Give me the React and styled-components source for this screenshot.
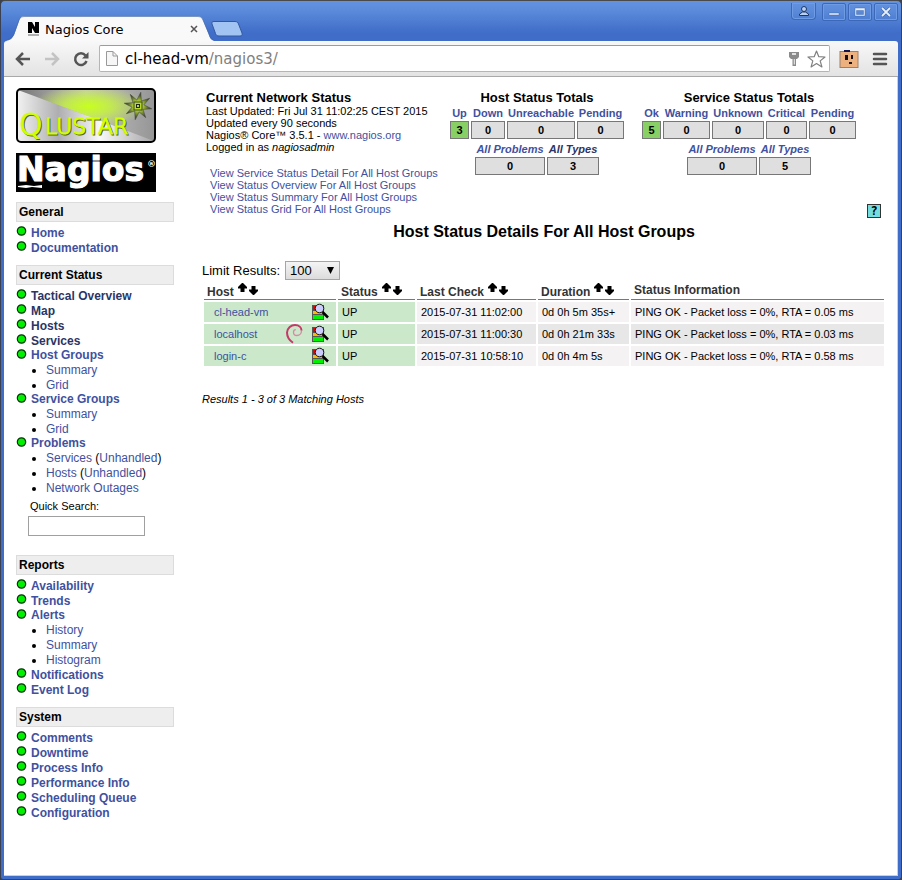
import React from "react";
import styled, { createGlobalStyle } from "styled-components";

const GlobalStyle = createGlobalStyle`
  *, *::before, *::after { box-sizing: border-box; }
  body {
    margin: 0;
    background: #3d4048;
    color: #000;
    font-family: "Liberation Sans", Arial, sans-serif;
    font-size: 11px;
    line-height: 12px;
  }
  a { color: #3f51a0; text-decoration: none; }
  ul, h1, h2, h3, p { margin: 0; padding: 0; }
  svg { display: block; flex: none; overflow: visible; }
`;

/* ---------- window frame ---------- */

const Window = styled.div`
  display: flex;
  flex-direction: column;
  min-height: 100vh;
  padding: 0 3px 3px;
  border: 1px solid #3a4152;
  border-top-color: #4a4a4a;
  border-radius: 5px 5px 3px 3px;
  background: linear-gradient(#6393e0 0, #5a8ad9 10px, #3f6dc8 32px, #3f6dc8 100%);
`;

const TitleBar = styled.header`
  display: flex;
  align-items: flex-start;
  height: 40px;
`;

const TabStrip = styled.div`
  display: flex;
  flex: 1;
  align-items: flex-end;
  align-self: stretch;
  padding-left: 2px;
`;

const TabShape = styled.div`
  display: grid;
  width: 208px;
  height: 25px;

  > * { grid-area: 1 / 1; }
`;

const TabContent = styled.div`
  display: flex;
  align-items: center;
  gap: 5px;
  padding: 1px 16px 0 21px;
  font: 13px/15px "DejaVu Sans", sans-serif;
`;

const TabTitle = styled.span`
  flex: 1;
`;

const IconButton = styled.button`
  display: flex;
  align-items: center;
  justify-content: center;
  flex: none;
  width: ${(p) => p.$width || 16}px;
  height: ${(p) => p.$height || 16}px;
  padding: 0;
  border: 0;
  background: none;
`;

const NewTab = styled(IconButton)`
  margin: 0 0 4px -3px;
`;

const WindowControls = styled.div`
  display: flex;
  gap: 2px;
  padding-top: 2px;
`;

const WindowButton = styled(IconButton)`
  border: 1px solid #3d68b8;
  border-radius: 2px;
  box-shadow: inset 0 0 0 1px #6f9be4;
`;

const ProfileButton = styled(WindowButton)`
  margin-right: 4px;
  border-top: 0;
  border-radius: 0 0 4px 4px;
`;

const Toolbar = styled.nav`
  display: flex;
  align-items: center;
  height: 36px;
  padding: 0 10px;
  border-bottom: 1px solid #a9a9a9;
  border-radius: 3px 3px 0 0;
  background: linear-gradient(#f8f8f8, #e3e3e3);
`;

const NavButtons = styled.div`
  display: flex;
  gap: 11px;
  margin-right: 9px;
`;

const AddressBar = styled.div`
  display: flex;
  flex: 1;
  align-items: center;
  gap: 7px;
  height: 27px;
  margin-right: 9px;
  padding: 0 3px 0 6px;
  border: 1px solid #b5b5b5;
  border-top-color: #9c9c9c;
  border-radius: 2px;
  background: #fff;
`;

const Address = styled.span`
  flex: 1;
  color: #808080;
  font: 15px/20px "DejaVu Sans", sans-serif;
`;

const Domain = styled.span`
  color: #000;
`;

const ToolbarActions = styled.div`
  display: flex;
  align-items: center;
  gap: 13px;
`;

const Viewport = styled.main`
  display: flex;
  flex: 1;
  align-items: flex-start;
  gap: 28px;
  padding: 11px 11px 40px 12px;
  border-right: 1px solid #d0d0d0;
  border-bottom: 1px solid #d0d0d0;
  background: #fff;
`;

/* ---------- sidebar ---------- */

const Sidebar = styled.aside`
  display: flex;
  flex: none;
  flex-direction: column;
  gap: 10px;
  width: 158px;
`;

const SectionTitle = styled.h2`
  height: 20px;
  padding-left: 2px;
  border: 1px solid #dcdcdc;
  background: #eee;
  font-size: 12px;
  line-height: 18px;
`;

const Menu = styled.ul`
  padding-top: 4px;
  list-style: none;
  font-size: 12px;
  line-height: 15px;
`;

const Section = styled.section`
  & + & { margin-top: -1px; }
`;

const MenuRow = styled.div`
  display: flex;
  gap: 4px;
  height: ${(p) => (p.$compact ? 14 : 15)}px;
  padding-left: 1px;
  font-weight: bold;
  line-height: ${(p) => (p.$compact ? 13 : 15)}px;
`;

const MenuLink = styled.a`
  color: ${(p) => (p.$dark ? "#2b3566" : "#3f51a0")};
`;

const SubMenu = styled.ul`
  padding-left: 30px;
  list-style: disc;
`;

const SearchForm = styled.form`
  display: flex;
  flex-direction: column;
  align-items: flex-start;
  gap: 4px;
  padding: 4px 0 10px 12px;
`;

const SearchLabel = styled.label`
  padding-left: 2px;
`;

const SearchInput = styled.input`
  width: 117px;
  height: 20px;
  padding: 1px 3px;
  border: 1px solid #a0a0a0;
  background: #fff;
  font: 12px "Liberation Sans", sans-serif;
`;

/* ---------- status page ---------- */

const Content = styled.section`
  flex: 1;
  min-width: 0;
`;

const Summary = styled.div`
  display: flex;
  align-items: flex-start;
  gap: 14px;
`;

const Overview = styled.div`
  width: 232px;
  padding: 2px 0 0 4px;
  white-space: nowrap;
`;

const Heading = styled.h3`
  font-size: 13px;
  line-height: 15px;
`;

const ViewLinks = styled.ul`
  padding: 14px 0 0 4px;
  list-style: none;
`;

const Totals = styled.div`
  display: flex;
  flex-direction: column;
  align-items: center;
  padding-top: 2px;
`;

const TotalsTable = styled.table`
  border-spacing: 2px 1px;
  text-align: center;
  font-weight: bold;
  font-style: ${(p) => (p.$italic ? "italic" : "normal")};

  & + & { margin-top: 1px; }
`;

const TotalsHead = styled.th`
  width: ${(p) => p.$width}px;
  height: 14px;
  padding: 0;
  white-space: nowrap;
`;

const TotalsCell = styled.td`
  height: 18px;
  padding: 0;
  border: 1px solid #777;
  background: ${(p) => (p.$ok ? "#88d066" : "#dfdfdf")};
  font-style: normal;
`;

const HelpRow = styled.div`
  display: flex;
  justify-content: flex-end;
  margin-top: -11px;
  padding-right: 5px;
`;

const HelpButton = styled.button`
  width: 14px;
  height: 14px;
  padding: 0;
  border: 1px solid #333;
  background: #74dede;
  color: #000;
  font: bold 12px/12px "DejaVu Sans Mono", monospace;
`;

const PageTitle = styled.h1`
  margin: 5px 0 20px;
  text-align: center;
  font-size: 16px;
  line-height: 18px;
`;

const LimitRow = styled.div`
  display: flex;
  align-items: center;
  gap: 5px;
  font-size: 13px;
  line-height: 19px;
`;

const SelectBox = styled.div`
  display: grid;
  align-items: center;

  > * { grid-area: 1 / 1; }
  > svg { justify-self: end; margin-right: 6px; pointer-events: none; }
`;

const Select = styled.select`
  width: 55px;
  height: 19px;
  padding: 0 4px;
  appearance: none;
  border: 1px solid #a5a5a5;
  border-radius: 0;
  background: linear-gradient(#f4f4f4, #dcdcdc);
  color: #000;
  font: 13px "Liberation Sans", sans-serif;
`;

const StatusTable = styled.table`
  width: 100%;
  margin-top: 2px;
  table-layout: fixed;
  border-spacing: 2px;
`;

const Col = styled.col`
  width: ${(p) => (p.$width ? p.$width + "px" : "auto")};
`;

const HeadCell = styled.th`
  height: 16px;
  padding: 0 3px;
  border-bottom: 1px solid #777;
  color: #333;
  font-size: 12px;
  text-align: left;
  vertical-align: top;
`;

const HeadLabel = styled.span`
  display: flex;
  align-items: flex-start;
  gap: 4px;
  padding-top: ${(p) => (p.$sortable ? 2 : 0)}px;
  line-height: 12px;

  > svg { margin-top: -3px; }
`;

const Row = styled.tr`
  background: ${(p) => (p.$odd ? "#e7e7e7" : "#f4f2f2")};
`;

const Cell = styled.td`
  height: 20px;
  padding: 0 4px;
  background: ${(p) => (p.$up ? "#cbe8cb" : "transparent")};
  white-space: nowrap;
`;

const HostCell = styled.div`
  display: flex;
  align-items: center;
  gap: 9px;
  padding: 0 3px 0 6px;

  > a { flex: 1; }
`;

const Results = styled.p`
  margin-top: 25px;
  font-style: italic;
`;

/* ---------- icons ---------- */

const TabBackground = () => (
  <svg width="208" height="25" viewBox="0 0 208 25">
    <path d="M0 25 C4 24 6 23 8 19 L13 5 C14 1 16 0 19 0 H191 C194 0 196 1 197 4 L203 19 C204 23 206 24 208 25 Z" fill="#f9f9f9" />
    <path d="M0 24 C4 23 6 22 8 18 L13 4 C14 1 16 .5 19 .5 H191 C194 .5 196 1 197 4 L203 18 C204 22 206 23 208 24" fill="none" stroke="#4568a8" strokeWidth=".7" />
  </svg>
);

const FavIcon = () => (
  <svg width="13" height="14" viewBox="0 0 13 14">
    <path d="M1 0h4l3 5V0h4v11H8L5 6v5H1z" fill="#000" />
    <path d="M1 13h11" stroke="#666" />
  </svg>
);

const CloseIcon = () => (
  <svg width="8" height="8" viewBox="0 0 8 8">
    <path d="M1 1l6 6M7 1L1 7" stroke="#555" strokeWidth="1.5" />
  </svg>
);

const NewTabIcon = () => (
  <svg width="32" height="16" viewBox="0 0 32 16">
    <path d="M3 .5h21c2 0 3 1 3.500 2.500L31 12c.5 2 0 3-2 3H8c-2 0-3-1-3.500-2.500L1 3C.5 1.500 1 .5 3 .5z" fill="#a2c4f3" stroke="#33589f" />
  </svg>
);

const ProfileIcon = () => (
  <svg width="12" height="12" viewBox="0 0 12 12">
    <path d="M1.500 10.500V9L4.500 7h3l3 2v1.500z" fill="#b9d0f3" stroke="#1b3564" />
    <circle cx="6" cy="4" r="2.500" fill="#b9d0f3" stroke="#1b3564" />
  </svg>
);

const MinimizeIcon = () => (
  <svg width="12" height="10" viewBox="0 0 12 10">
    <rect x="1" y="6" width="10" height="2" fill="#e6effc" stroke="#345c9f" strokeWidth=".4" />
  </svg>
);

const MaximizeIcon = () => (
  <svg width="12" height="10" viewBox="0 0 12 10">
    <path d="M1 1h10v8H1zM2.500 3.500v4h7v-4z" fill="#e6effc" fillRule="evenodd" stroke="#345c9f" strokeWidth=".4" />
  </svg>
);

const WindowCloseIcon = () => (
  <svg width="10" height="10" viewBox="0 0 10 10">
    <path d="M1 1l8 8M9 1L1 9" stroke="#345c9f" strokeWidth="3" />
    <path d="M1 1l8 8M9 1L1 9" stroke="#e6effc" strokeWidth="1.800" />
  </svg>
);

const ArrowIcon = ({ color, flip }) => (
  <svg width="16" height="14" viewBox="0 0 16 14">
    <path d={flip ? "M1 7h12M8 1l6 6-6 6" : "M15 7H3M8 1L2 7l6 6"} fill="none" stroke={color} strokeWidth="2.500" />
  </svg>
);

const ReloadIcon = () => (
  <svg width="16" height="16" viewBox="0 0 16 16">
    <path d="M12.500 4.500A5.800 5.800 0 1 0 13.500 10" fill="none" stroke="#555" strokeWidth="2.500" />
    <path d="M15.500 1v6.500H9z" fill="#555" />
  </svg>
);

const PageIcon = () => (
  <svg width="12" height="15" viewBox="0 0 12 15">
    <path d="M.5.5h6.500l4.500 4.500v9.500H.5z" fill="#f6f6f6" stroke="#999" />
    <path d="M7 .5V5h4.500" fill="none" stroke="#999" />
  </svg>
);

const KeyIcon = () => (
  <svg width="12" height="16" viewBox="0 0 12 16">
    <path d="M1 1h10v5L9 8H8v7H4.500V8H3L1 6zM4 2.200v1.600h4V2.200zM5.800 8v5.500h.9V8z" fill="#8b8b8b" fillRule="evenodd" />
  </svg>
);

const StarIcon = () => (
  <svg width="19" height="18" viewBox="0 0 19 18">
    <path d="M9.500 1l2.300 5.700 6.200.3-4.800 3.900 1.700 6-5.400-3.400-5.400 3.400 1.700-6L1 7l6.200-.3z" fill="#fff" stroke="#808080" strokeWidth="1.200" strokeLinejoin="round" />
  </svg>
);

const BoxFaceIcon = () => (
  <svg width="20" height="20" viewBox="0 0 20 20">
    <rect x="1" y="2.500" width="18" height="16" fill="#edb17f" stroke="#9b806c" />
    <path d="M5 1h6v2H5z" fill="#12124f" />
    <path d="M6 6h3v5H6zM12 6h2v4h-2zM10 13h3v2h-3z" fill="#171010" />
  </svg>
);

const MenuIcon = () => (
  <svg width="14" height="14" viewBox="0 0 14 14">
    <path d="M1 2h12M1 7h12M1 12h12" stroke="#555" strokeWidth="2.500" strokeLinecap="round" />
  </svg>
);

/* Eight long rays around the badge in the logo's corner. */
const rays = Array.from({ length: 16 }, (_, i) => {
  const angle = (i * Math.PI) / 8 + 0.2;
  const radius = i % 2 ? 6 : 14;
  return `${122 + radius * Math.cos(angle)},${18 + radius * Math.sin(angle)}`;
}).join(" ");

const QlustarLogo = () => (
  <svg width="140" height="55" viewBox="0 0 140 55" role="img" aria-label="Qlustar">
    <defs>
      <linearGradient id="metal" x1="0" y1="0" x2="1" y2="0">
        <stop offset="0" stopColor="#f2f2f2" />
        <stop offset=".3" stopColor="#aeaeb0" />
        <stop offset=".6" stopColor="#f8f8f8" />
        <stop offset="1" stopColor="#a5a5a7" />
      </linearGradient>
      <linearGradient id="shade" x1="0" y1="0" x2="1" y2="0">
        <stop offset="0" stopColor="#777" />
        <stop offset=".5" stopColor="#c5c5c5" />
        <stop offset="1" stopColor="#969696" />
      </linearGradient>
      <radialGradient id="glow" cx=".52" cy=".32" r=".42">
        <stop offset="0" stopColor="#c8ff1c" />
        <stop offset=".4" stopColor="#c5f53a" stopOpacity=".8" />
        <stop offset="1" stopColor="#c8f040" stopOpacity="0" />
      </radialGradient>
      <radialGradient id="ray" gradientUnits="userSpaceOnUse" cx="122" cy="18" r="14">
        <stop offset=".3" stopColor="#b4d830" />
        <stop offset=".9" stopColor="#33382e" />
      </radialGradient>
    </defs>
    <rect x="1" y="1" width="138" height="53" rx="4" fill="url(#metal)" />
    <path d="M2 2H138V53L80 31Z" fill="url(#shade)" />
    <path d="M2 2H138V53L80 31Z" fill="url(#glow)" />
    <polygon points={rays} fill="url(#ray)" stroke="#4a4f42" strokeWidth=".6" />
    <rect x="118" y="14" width="8" height="8" fill="#bad832" stroke="#3c4725" />
    <rect x="120.500" y="16.500" width="3" height="3" fill="none" stroke="#202820" />
    <g fontFamily="DejaVu Sans" fontWeight="200" strokeWidth="1.200">
      <text x="4" y="48" fontSize="30" fill="#5a6520" stroke="#5a6520">Q</text>
      <text x="30" y="47" fontSize="22" fill="#5a6520" stroke="#5a6520">LUSTAR</text>
      <text x="3" y="47" fontSize="30" fill="#d0ff00" stroke="#d0ff00">Q</text>
      <text x="29" y="46" fontSize="22" fill="#d0ff00" stroke="#d0ff00">LUSTAR</text>
    </g>
    <rect x="1" y="1" width="138" height="53" rx="4" fill="none" stroke="#000" strokeWidth="2" />
  </svg>
);

const NagiosLogo = () => (
  <svg width="140" height="39" viewBox="0 0 140 39" role="img" aria-label="Nagios">
    <rect width="140" height="39" fill="#000" />
    <g fill="#fff" fontFamily="DejaVu Sans" fontWeight="bold">
      <text x="1" y="28" fontSize="33" stroke="#fff" strokeWidth="1.200">Nagios</text>
      <text x="131" y="14" fontSize="9">®</text>
    </g>
    <path d="M2 33l8-1 8 1 8-1v3l-10-1-6 1-8-1z" fill="#fff" />
  </svg>
);

const GreenDot = () => (
  <svg width="10" height="10" viewBox="0 0 10 10">
    <circle cx="4.500" cy="5" r="4.200" fill="#00f000" stroke="#073807" strokeWidth="1.200" />
  </svg>
);

const SortIcons = () => (
  <svg width="21" height="12" viewBox="0 0 21 12">
    <path d="M4 0h1l4 4v1.500H6.500V9h-4V5.500H0V4z" fill="#000" />
    <path d="M13.500 3h4v3.500H20V8l-4 4h-1l-4-4V6.500h2.500z" fill="#000" />
  </svg>
);

const SelectArrow = () => (
  <svg width="8" height="8" viewBox="0 0 8 8">
    <path d="M1 0h7L4.500 7z" fill="#000" />
  </svg>
);

const DetailIcon = () => (
  <svg width="17" height="18" viewBox="0 0 17 18">
    <rect x=".5" y="2.500" width="11" height="14" fill="#ffb800" stroke="#555" />
    <path d="M1 3h4v4H1z" fill="#f00000" />
    <path d="M1 12h10v4H1z" fill="#00f000" />
    <path d="M1 7.500h3M1 11.500h10" stroke="#555" />
    <path d="M10.500 9l5.500 5.500" stroke="#000" strokeWidth="2.500" />
    <circle cx="7.500" cy="5.500" r="4.300" fill="#ccccff" stroke="#111" />
  </svg>
);

const DebianIcon = () => (
  <svg width="17" height="20" viewBox="0 0 17 20">
    <path d="M15.500 6.500c0 3-2 5-4.500 5-2 0-3.500-1.500-3.500-3.300 0-1.500 1-2.500 2.300-2.500" fill="none" stroke="#d78aa4" strokeWidth="1.300" />
    <path d="M7 18.800C3 16 1 12 1 8.500 1.500 4 5 1 9 1c4 0 6.500 2.500 6.500 5.500" fill="none" stroke="#c63a68" strokeWidth="2" />
  </svg>
);

/* ---------- data ---------- */

const sections = [
  { title: "General", items: [{ label: "Home" }, { label: "Documentation" }] },
  {
    title: "Current Status",
    search: true,
    items: [
      { label: "Tactical Overview", dark: true },
      { label: "Map", dark: true },
      { label: "Hosts", dark: true },
      { label: "Services", dark: true },
      { label: "Host Groups", children: [["Summary"], ["Grid"]] },
      { label: "Service Groups", children: [["Summary"], ["Grid"]] },
      { label: "Problems", children: [["Services", "Unhandled"], ["Hosts", "Unhandled"], ["Network Outages"]] },
    ],
  },
  {
    title: "Reports",
    items: [
      { label: "Availability" },
      { label: "Trends" },
      { label: "Alerts", children: [["History"], ["Summary"], ["Histogram"]] },
      { label: "Notifications" },
      { label: "Event Log" },
    ],
  },
  {
    title: "System",
    items: ["Comments", "Downtime", "Process Info", "Performance Info", "Scheduling Queue", "Configuration"].map((label) => ({ label })),
  },
];

const totals = [
  {
    title: "Host Status Totals",
    states: [["Up", 3, 19], ["Down", 0, 34], ["Unreachable", 0, 68], ["Pending", 0, 47]],
    all: [["All Problems", 0, 70], ["All Types", 3, 52, true]],
  },
  {
    title: "Service Status Totals",
    states: [["Ok", 5, 19], ["Warning", 0, 47], ["Unknown", 0, 52], ["Critical", 0, 41], ["Pending", 0, 47]],
    all: [["All Problems", 0, 70], ["All Types", 5, 52]],
  },
];

const views = ["Service Status Detail", "Status Overview", "Status Summary", "Status Grid"];

const columns = [
  ["Host", 132],
  ["Status", 77],
  ["Last Check", 119],
  ["Duration", 91],
  ["Status Information", 0],
];

const hosts = [
  { name: "cl-head-vm", check: "2015-07-31 11:02:00", duration: "0d 0h 5m 35s+", rta: "0.05" },
  { name: "localhost", debian: true, check: "2015-07-31 11:00:30", duration: "0d 0h 21m 33s", rta: "0.03" },
  { name: "login-c", check: "2015-07-31 10:58:10", duration: "0d 0h 4m 5s", rta: "0.58" },
];

/* ---------- parts ---------- */

const MenuItem = ({ item }) => (
  <li>
    <MenuRow $compact={Boolean(item.children)}>
      <GreenDot />
      <MenuLink href="#" $dark={item.dark}>{item.label}</MenuLink>
    </MenuRow>
    {item.children && (
      <SubMenu>
        {item.children.map(([label, extra]) => (
          <li key={label}>
            <a href="#">{label}</a>
            {extra && <> (<a href="#">{extra}</a>)</>}
          </li>
        ))}
      </SubMenu>
    )}
  </li>
);

const TotalsRows = ({ entries, italic }) => (
  <TotalsTable $italic={italic}>
    <thead>
      <tr>
        {entries.map(([label, , width, dark]) => (
          <TotalsHead key={label} $width={width} scope="col">
            <MenuLink href="#" $dark={dark}>{label}</MenuLink>
          </TotalsHead>
        ))}
      </tr>
    </thead>
    <tbody>
      <tr>
        {entries.map(([label, count], i) => (
          <TotalsCell key={label} $ok={!italic && i === 0}>{count}</TotalsCell>
        ))}
      </tr>
    </tbody>
  </TotalsTable>
);

const BrowserChrome = () => (
  <>
    <TitleBar>
      <TabStrip>
        <TabShape>
          <TabBackground />
          <TabContent>
            <FavIcon />
            <TabTitle>Nagios Core</TabTitle>
            <IconButton $width={8} $height={8} aria-label="Close tab"><CloseIcon /></IconButton>
          </TabContent>
        </TabShape>
        <NewTab $width={32} aria-label="New tab"><NewTabIcon /></NewTab>
      </TabStrip>
      <WindowControls>
        <ProfileButton $width={25} $height={17} aria-label="Profile"><ProfileIcon /></ProfileButton>
        <WindowButton $width={24} $height={18} aria-label="Minimize"><MinimizeIcon /></WindowButton>
        <WindowButton $width={24} $height={18} aria-label="Maximize"><MaximizeIcon /></WindowButton>
        <WindowButton $width={24} $height={18} aria-label="Close"><WindowCloseIcon /></WindowButton>
      </WindowControls>
    </TitleBar>
    <Toolbar>
      <NavButtons>
        <IconButton $width={18} aria-label="Back"><ArrowIcon color="#555" /></IconButton>
        <IconButton $width={18} aria-label="Forward"><ArrowIcon color="#c3c3c3" flip /></IconButton>
        <IconButton $width={18} aria-label="Reload"><ReloadIcon /></IconButton>
      </NavButtons>
      <AddressBar>
        <PageIcon />
        <Address><Domain>cl-head-vm</Domain>/nagios3/</Address>
        <KeyIcon />
        <IconButton $width={19} $height={18} aria-label="Bookmark"><StarIcon /></IconButton>
      </AddressBar>
      <ToolbarActions>
        <IconButton $width={20} $height={20} aria-label="Extension"><BoxFaceIcon /></IconButton>
        <IconButton $width={16} aria-label="Menu"><MenuIcon /></IconButton>
      </ToolbarActions>
    </Toolbar>
  </>
);

const Navigation = () => (
  <Sidebar>
    <QlustarLogo />
    <NagiosLogo />
    {sections.map((section) => (
      <Section key={section.title}>
        <SectionTitle>{section.title}</SectionTitle>
        <Menu>
          {section.items.map((item) => <MenuItem key={item.label} item={item} />)}
        </Menu>
        {section.search && (
          <SearchForm>
            <SearchLabel htmlFor="quick-search">Quick Search:</SearchLabel>
            <SearchInput id="quick-search" type="text" />
          </SearchForm>
        )}
      </Section>
    ))}
  </Sidebar>
);

export default function App() {
  return (
    <>
      <GlobalStyle />
      <Window>
        <BrowserChrome />
        <Viewport>
          <Navigation />
          <Content>
            <Summary>
              <Overview>
                <Heading>Current Network Status</Heading>
                <p>Last Updated: Fri Jul 31 11:02:25 CEST 2015</p>
                <p>Updated every 90 seconds</p>
                <p>Nagios® Core™ 3.5.1 - <a href="#">www.nagios.org</a></p>
                <p>Logged in as <i>nagiosadmin</i></p>
                <ViewLinks>
                  {views.map((view) => (
                    <li key={view}><a href="#">View {view} For All Host Groups</a></li>
                  ))}
                </ViewLinks>
              </Overview>
              {totals.map((group) => (
                <Totals key={group.title}>
                  <Heading>{group.title}</Heading>
                  <TotalsRows entries={group.states} />
                  <TotalsRows entries={group.all} italic />
                </Totals>
              ))}
            </Summary>
            <HelpRow>
              <HelpButton aria-label="Help">?</HelpButton>
            </HelpRow>
            <PageTitle>Host Status Details For All Host Groups</PageTitle>
            <LimitRow>
              <label htmlFor="limit">Limit Results:</label>
              <SelectBox>
                <Select id="limit" defaultValue="100">
                  <option>50</option>
                  <option>100</option>
                  <option>250</option>
                </Select>
                <SelectArrow />
              </SelectBox>
            </LimitRow>
            <StatusTable>
              <colgroup>
                {columns.map(([label, width]) => <Col key={label} $width={width} />)}
              </colgroup>
              <thead>
                <tr>
                  {columns.map(([label, width]) => (
                    <HeadCell key={label} scope="col">
                      <HeadLabel $sortable={width > 0}>
                        {label}
                        {width > 0 && <SortIcons />}
                      </HeadLabel>
                    </HeadCell>
                  ))}
                </tr>
              </thead>
              <tbody>
                {hosts.map((host, i) => (
                  <Row key={host.name} $odd={i % 2 === 1}>
                    <Cell $up>
                      <HostCell>
                        <a href="#">{host.name}</a>
                        {host.debian && <DebianIcon />}
                        <DetailIcon />
                      </HostCell>
                    </Cell>
                    <Cell $up>UP</Cell>
                    <Cell>{host.check}</Cell>
                    <Cell>{host.duration}</Cell>
                    <Cell>PING OK - Packet loss = 0%, RTA = {host.rta} ms</Cell>
                  </Row>
                ))}
              </tbody>
            </StatusTable>
            <Results>Results 1 - 3 of 3 Matching Hosts</Results>
          </Content>
        </Viewport>
      </Window>
    </>
  );
}
